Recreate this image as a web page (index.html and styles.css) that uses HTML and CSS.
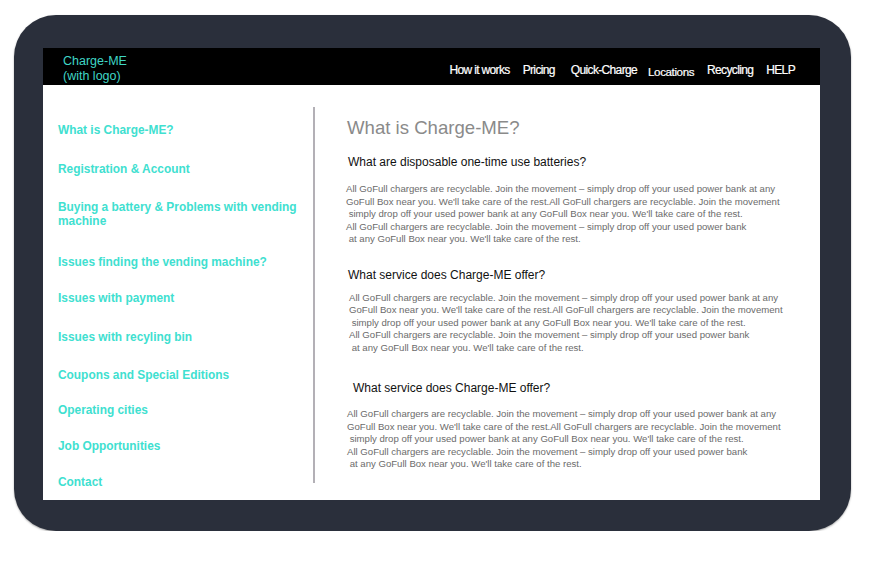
FILE: index.html
```html
<!DOCTYPE html>
<html lang="en">
<head>
<meta charset="utf-8">
<title>Charge-ME FAQ</title>
<link rel="stylesheet" href="styles.css">
</head>
<body>
<div class="tablet">
  <div class="screen">
    <header class="topbar">
      <div class="logo">Charge-ME<br>(with logo)</div>
      <nav class="mainnav">
        <a href="#">How it works</a>
        <a href="#">Pricing</a>
        <a href="#" class="wide">Quick-Charge</a>
        <a href="#" class="low">Locations</a>
        <a href="#">Recycling</a>
        <a href="#">HELP</a>
      </nav>
    </header>
    <div class="content">
      <aside class="sidebar">
        <ul class="faqnav">
          <li><a href="#">What is Charge-ME?</a></li>
          <li><a href="#">Registration &amp; Account</a></li>
          <li><a href="#">Buying a battery &amp; Problems with vending machine</a></li>
          <li><a href="#">Issues finding the vending machine?</a></li>
          <li><a href="#">Issues with payment</a></li>
          <li><a href="#">Issues with recyling bin</a></li>
          <li><a href="#">Coupons and Special Editions</a></li>
          <li><a href="#">Operating cities</a></li>
          <li><a href="#">Job Opportunities</a></li>
          <li><a href="#">Contact</a></li>
        </ul>
      </aside>
      <main class="main">
        <h1 class="title">What is Charge-ME?</h1>
        <section class="qa qa-1">
          <h2 class="question">What are disposable one-time use batteries?</h2>
          <p class="answer">All GoFull chargers are recyclable. Join the movement – simply drop off your used power bank at any<br>GoFull Box near you. We'll take care of the rest.All GoFull chargers are recyclable. Join the movement<br>&nbsp;simply drop off your used power bank at any GoFull Box near you. We'll take care of the rest.<br>All GoFull chargers are recyclable. Join the movement – simply drop off your used power bank<br>&nbsp;at any GoFull Box near you. We'll take care of the rest.</p>
        </section>
        <section class="qa qa-2">
          <h2 class="question">What service does Charge-ME offer?</h2>
          <p class="answer">All GoFull chargers are recyclable. Join the movement – simply drop off your used power bank at any<br>GoFull Box near you. We'll take care of the rest.All GoFull chargers are recyclable. Join the movement<br>&nbsp;simply drop off your used power bank at any GoFull Box near you. We'll take care of the rest.<br>All GoFull chargers are recyclable. Join the movement – simply drop off your used power bank<br>&nbsp;at any GoFull Box near you. We'll take care of the rest.</p>
        </section>
        <section class="qa qa-3">
          <h2 class="question">What service does Charge-ME offer?</h2>
          <p class="answer">All GoFull chargers are recyclable. Join the movement – simply drop off your used power bank at any<br>GoFull Box near you. We'll take care of the rest.All GoFull chargers are recyclable. Join the movement<br>&nbsp;simply drop off your used power bank at any GoFull Box near you. We'll take care of the rest.<br>All GoFull chargers are recyclable. Join the movement – simply drop off your used power bank<br>&nbsp;at any GoFull Box near you. We'll take care of the rest.</p>
        </section>
      </main>
    </div>
  </div>
</div>
</body>
</html>
```

FILE: styles.css
```css
* { box-sizing: border-box; }

body {
  margin: 0;
  background: #ffffff;
  font-family: "Liberation Sans", Helvetica, Arial, sans-serif;
}

.tablet {
  margin: 15px 0 0 14px;
  width: 837px;
  height: 516px;
  padding: 33px 31px 31px 29px;
  background: #2a2f3b;
  border-radius: 42px;
  box-shadow: 0 1px 2px rgba(0, 0, 0, 0.35);
}

.screen {
  width: 777px;
  height: 452px;
  background: #ffffff;
  display: flex;
  flex-direction: column;
}

.topbar {
  height: 37px;
  background: #000000;
  display: flex;
  justify-content: space-between;
  align-items: flex-start;
  padding: 6px 25px 0 20px;
}

.logo {
  color: #3fd6c6;
  font-size: 12.5px;
  line-height: 15px;
}

.mainnav {
  display: flex;
  gap: 13px;
  padding-top: 9px;
  align-items: flex-start;
}

.mainnav a {
  color: #ffffff;
  text-decoration: none;
  font-size: 12px;
  line-height: 14px;
  letter-spacing: -0.65px;
  -webkit-text-stroke: 0.2px #ffffff;
}

.mainnav a.wide { margin-left: 3px; }

.mainnav a.low {
  font-size: 11.6px;
  letter-spacing: -0.4px;
  padding-top: 2px;
  margin-left: -2px;
}

.content {
  flex: 1;
  display: flex;
  align-items: flex-start;
  padding-top: 22px;
}

.sidebar {
  width: 272px;
  height: 376px;
  flex-shrink: 0;
  border-right: 2px solid #b3b0b6;
  padding: 16px 0 0 15px;
}

.faqnav {
  list-style: none;
  margin: 0;
  padding: 0;
}

.faqnav li { margin-top: 25px; }
.faqnav li:nth-child(1) { margin-top: 0; }
.faqnav li:nth-child(3) { margin-top: 24px; }
.faqnav li:nth-child(4) { margin-top: 27px; }
.faqnav li:nth-child(5) { margin-top: 22px; }
.faqnav li:nth-child(7) { margin-top: 24px; }
.faqnav li:nth-child(8) { margin-top: 21px; }
.faqnav li:nth-child(9) { margin-top: 22px; }
.faqnav li:nth-child(10) { margin-top: 22px; }

.faqnav a {
  display: block;
  width: 250px;
  color: #40e0d0;
  font-weight: bold;
  font-size: 11.9px;
  line-height: 14px;
  text-decoration: none;
}

.main {
  flex: 1;
  padding: 10px 0 0 32px;
}

.title {
  margin: 0;
  font-size: 18.6px;
  line-height: 22px;
  font-weight: normal;
  color: #8a8a8a;
}

.question {
  margin: 0;
  font-size: 12px;
  line-height: 16px;
  font-weight: normal;
  color: #111111;
}

.answer {
  margin: 0;
  font-size: 9.6px;
  line-height: 12.5px;
  color: #6b6b6b;
  white-space: nowrap;
}

.qa-1 { margin-top: 15px; padding-left: 1px; }
.qa-1 .answer { margin: 13px 0 0 -2px; }

.qa-2 { margin-top: 21px; padding-left: 1px; }
.qa-2 .answer { margin: 9px 0 0 1px; }

.qa-3 { margin-top: 26px; padding-left: 6px; }
.qa-3 .answer { margin: 12px 0 0 -6px; }
```
